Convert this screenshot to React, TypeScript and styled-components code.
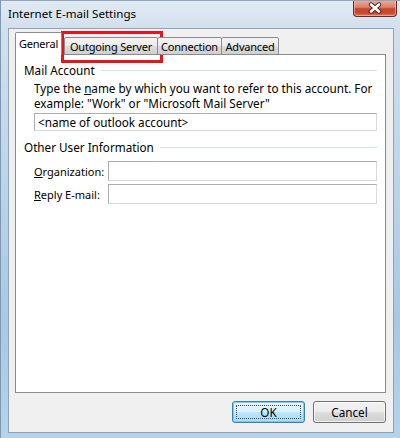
import React from 'react'
import styled, { createGlobalStyle } from 'styled-components'

const GlobalStyle = createGlobalStyle`
  html, body {
    margin: 0;
    padding: 0;
  }
  body {
    font-family: "Noto Sans", "Open Sans", sans-serif;
    font-size: 11.7px;
    color: #000;
  }
`

const Window = styled.div`
  width: 400px;
  height: 438px;
  box-sizing: border-box;
  display: flex;
  flex-direction: column;
  background: linear-gradient(to bottom, #e1eaf3 0px, #d2e0ed 28px, #bcd4e9 180px, #a9c8e3 320px, #b7d3ea 438px);
  border-left: 1px solid #7f98b2;
  border-top: 1px solid #8ea6bd;
  overflow: hidden;
`

const TitleBar = styled.div`
  height: 27px;
  display: flex;
  justify-content: space-between;
  align-items: flex-start;
  flex: none;
`

const Title = styled.div`
  padding: 5px 0 0 7px;
  font-size: 11.6px;
  color: #000;
  white-space: nowrap;
`

const CloseButton = styled.div`
  width: 44px;
  height: 17px;
  margin: -1px 3px 0 0;
  box-sizing: border-box;
  display: flex;
  align-items: center;
  justify-content: center;
  border: 1px solid #6b2b22;
  border-top: none;
  border-radius: 0 0 4px 4px;
  background: linear-gradient(to bottom, #eab0a0 0%, #dc8068 45%, #c8452e 55%, #c9452f 80%, #dc7a5c 100%);
  box-shadow: inset 0 0 0 1px rgba(255, 210, 200, 0.5);
`

const Client = styled.div`
  flex: 1;
  margin: 0 6px 5px 7px;
  background: #f0f0f0;
  border: 1px solid #8ea2b8;
  display: flex;
  flex-direction: column;
  padding: 4px 7px 0 6px;
`

const TabStrip = styled.div`
  display: flex;
  align-items: flex-end;
  height: 22px;
  position: relative;
  z-index: 1;
  margin-bottom: -1px;
`

const Tab = styled.div<{ $active?: boolean; $width: number; $offset?: number }>`
  position: relative;
  box-sizing: border-box;
  width: ${p => p.$width}px;
  height: ${p => (p.$active ? 23 : 18)}px;
  display: flex;
  align-items: ${p => (p.$active ? 'flex-start' : 'center')};
  justify-content: center;
  padding-top: ${p => (p.$active ? 3 : 0)}px;
  font-size: 11px;
  letter-spacing: -0.2px;
  white-space: nowrap;
  border: 1px solid #898c95;
  border-bottom: ${p => (p.$active ? 'none' : '1px solid #898c95')};
  border-radius: 2px 2px 0 0;
  margin-left: ${p => p.$offset ?? 0}px;
  background: ${p =>
    p.$active ? '#ffffff' : 'linear-gradient(to bottom, #f3f3f3 0%, #ebebeb 50%, #dddddd 51%, #cfcfcf 100%)'};
  z-index: ${p => (p.$active ? 2 : 1)};
`

const Highlight = styled.div`
  position: absolute;
  left: -4px;
  right: -6px;
  top: -7px;
  bottom: -9px;
  border: 3px solid #e3161e;
  pointer-events: none;
`

const Panel = styled.div`
  height: 339px;
  box-sizing: border-box;
  background: #ffffff;
  border: 1px solid #898c95;
  display: flex;
  flex-direction: column;
  padding: 7px 8px 0 8px;
`

const GroupHeader = styled.div<{ $gap: number }>`
  display: flex;
  align-items: center;
  height: 16px;
  white-space: nowrap;
  margin-top: ${p => p.$gap}px;
`

const GroupLine = styled.div`
  flex: 1;
  height: 0;
  border-top: 1px solid #d5dfe5;
  margin-left: 6px;
`

const Indented = styled.div`
  padding-left: 10px;
  display: flex;
  flex-direction: column;
`

const Description = styled.div`
  margin-top: 3px;
  display: flex;
  flex-direction: column;
`

const DescLine = styled.div`
  height: 15px;
  line-height: 15px;
  white-space: nowrap;
`

const Key = styled.span`
  text-decoration: underline;
  text-underline-offset: 1px;
`

const TextBox = styled.div<{ $gap: number }>`
  box-sizing: border-box;
  height: 20px;
  margin-top: ${p => p.$gap}px;
  border: 1px solid #abadb3;
  border-right-color: #d6d9de;
  border-bottom-color: #d6d9de;
  background: #fff;
  padding: 0 3px;
  display: flex;
  align-items: center;
  flex: 1;
  white-space: nowrap;
`

const FieldRow = styled.div<{ $gap: number }>`
  display: flex;
  align-items: center;
  margin-top: ${p => p.$gap}px;
`

const FieldLabel = styled.div`
  width: 74px;
  flex: none;
  font-size: 11px;
  white-space: nowrap;
`

const ButtonRow = styled.div`
  display: flex;
  justify-content: flex-end;
  gap: 8px;
  margin-top: 8px;
`

const Button = styled.div<{ $default?: boolean }>`
  width: 73px;
  height: 22px;
  box-sizing: border-box;
  display: flex;
  align-items: center;
  justify-content: center;
  border-radius: 3px;
  border: 1px solid ${p => (p.$default ? '#3c7fb1' : '#707070')};
  background: ${p =>
    p.$default
      ? 'linear-gradient(to bottom, #eaf6fd 0%, #d9f0fc 50%, #bee6fd 51%, #a7d9f5 100%)'
      : 'linear-gradient(to bottom, #f2f2f2 0%, #ebebeb 50%, #dddddd 51%, #cfcfcf 100%)'};
  box-shadow: inset 0 0 0 1px ${p => (p.$default ? 'rgba(120, 200, 240, 0.9)' : 'rgba(255, 255, 255, 0.7)')};
  position: relative;
`

const FocusRect = styled.div`
  position: absolute;
  inset: 3px;
  border: 1px dotted #3a4a5a;
  border-radius: 1px;
`

const CloseGlyph: React.FC = () => (
  <svg width="16" height="12" viewBox="0 0 16 12">
    <path d="M4 2.5 L12 9.5 M12 2.5 L4 9.5" stroke="#4a2620" strokeWidth="4.4" strokeLinecap="round" />
    <path d="M4 2.5 L12 9.5 M12 2.5 L4 9.5" stroke="#ffffff" strokeWidth="2.6" strokeLinecap="round" />
  </svg>
)

export default function App() {
  return (
    <>
      <GlobalStyle />
      <Window>
        <TitleBar>
          <Title>Internet E-mail Settings</Title>
          <CloseButton>
            <CloseGlyph />
          </CloseButton>
        </TitleBar>
        <Client>
          <TabStrip>
            <Tab $active $width={47}>General</Tab>
            <Tab $width={94} $offset={2}>
              Outgoing Server
              <Highlight />
            </Tab>
            <Tab $width={65} $offset={-1}>Connection</Tab>
            <Tab $width={58} $offset={-1}>Advanced</Tab>
          </TabStrip>
          <Panel>
            <GroupHeader $gap={0}>
              Mail Account
              <GroupLine />
            </GroupHeader>
            <Indented>
              <Description>
                <DescLine>
                  Type the <Key>n</Key>ame by which you want to refer to this account. For
                </DescLine>
                <DescLine>example: "Work" or "Microsoft Mail Server"</DescLine>
              </Description>
              <TextBox $gap={2}>&lt;name of outlook account&gt;</TextBox>
            </Indented>
            <GroupHeader $gap={8}>
              Other User Information
              <GroupLine />
            </GroupHeader>
            <Indented>
              <FieldRow $gap={6}>
                <FieldLabel>
                  <Key>O</Key>rganization:
                </FieldLabel>
                <TextBox $gap={0} />
              </FieldRow>
              <FieldRow $gap={3}>
                <FieldLabel>
                  <Key>R</Key>eply E-mail:
                </FieldLabel>
                <TextBox $gap={0} />
              </FieldRow>
            </Indented>
          </Panel>
          <ButtonRow>
            <Button $default>
              OK
              <FocusRect />
            </Button>
            <Button>Cancel</Button>
          </ButtonRow>
        </Client>
      </Window>
    </>
  )
}
